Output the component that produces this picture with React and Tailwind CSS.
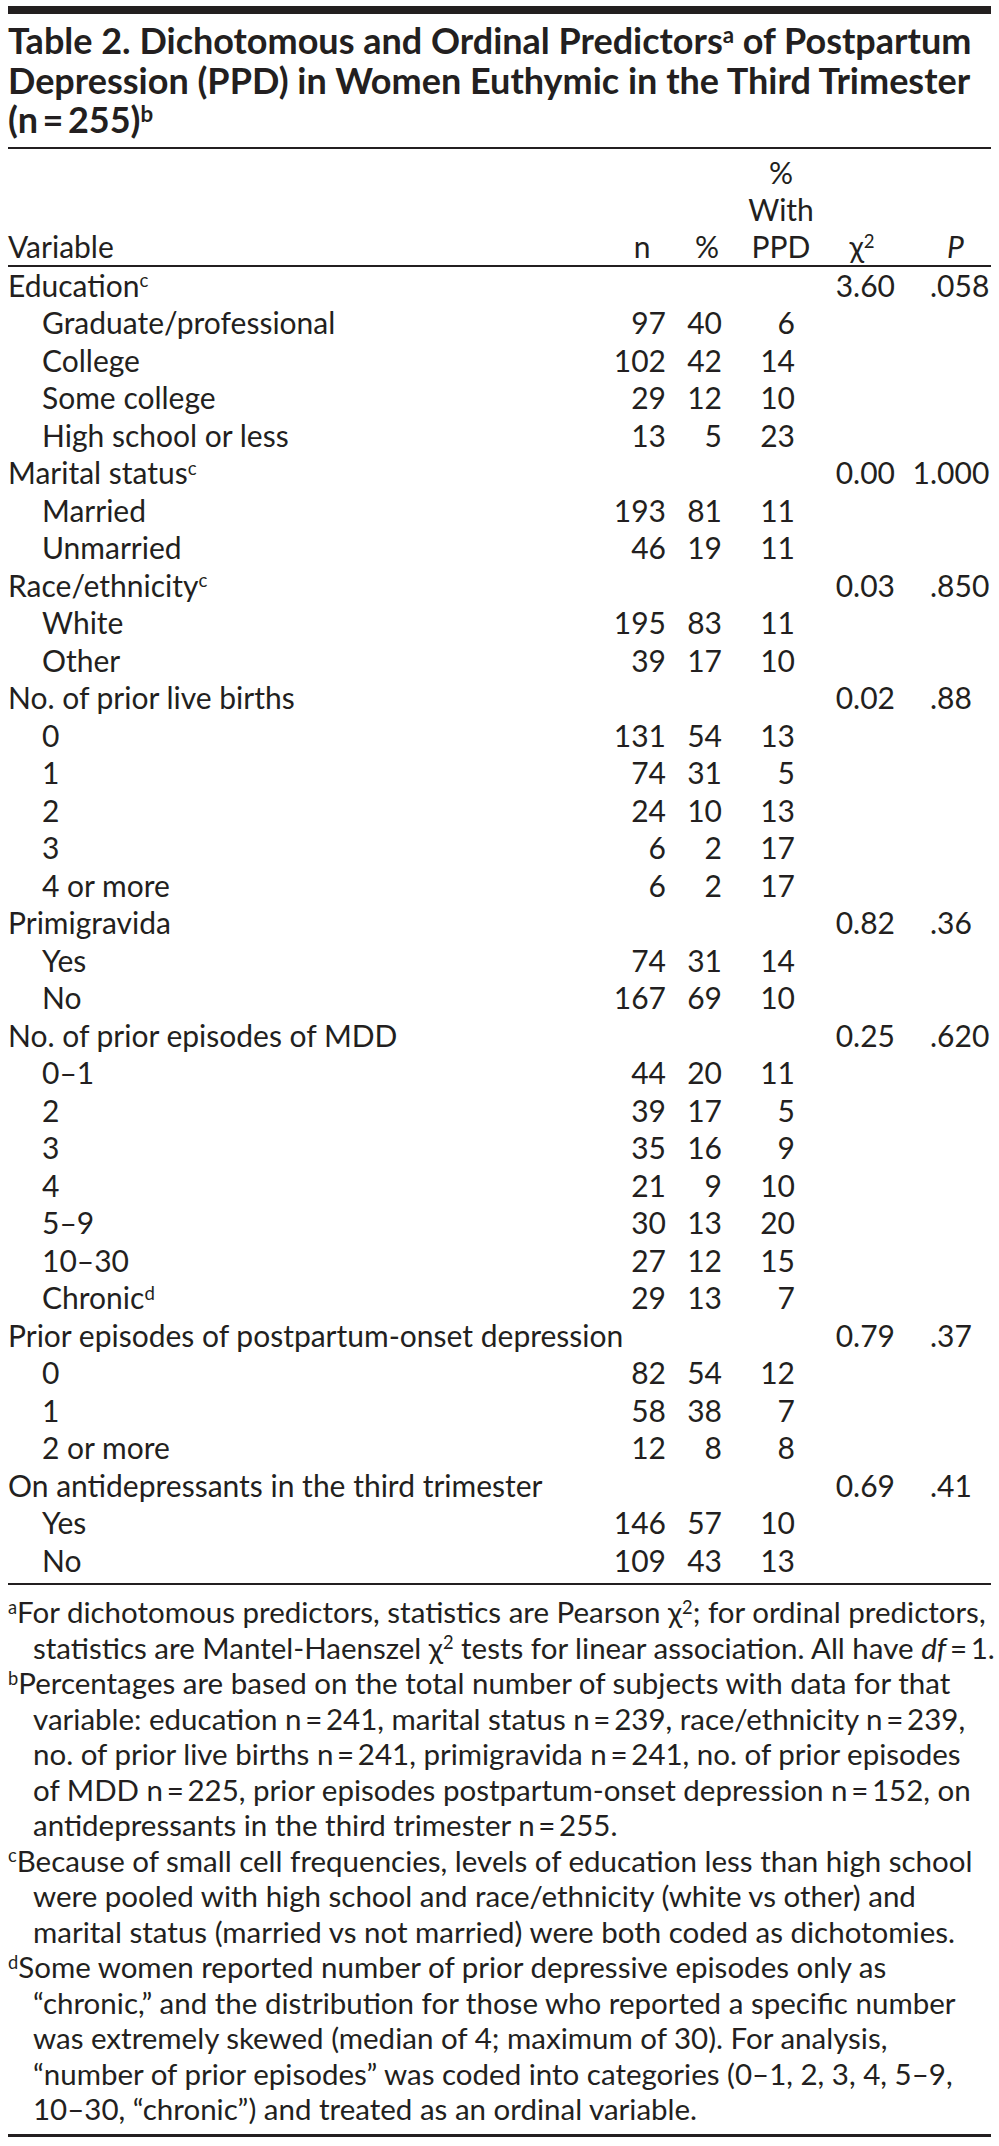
import React from "react";

const rows = [
  { label: "Education", sup: "c", chi: "3.60", p: ["", ".058"] },
  { label: "Graduate/professional", sub: true, n: "97", pct: "40", ppd: "6" },
  { label: "College", sub: true, n: "102", pct: "42", ppd: "14" },
  { label: "Some college", sub: true, n: "29", pct: "12", ppd: "10" },
  { label: "High school or less", sub: true, n: "13", pct: "5", ppd: "23" },
  { label: "Marital status", sup: "c", chi: "0.00", p: ["1", ".000"] },
  { label: "Married", sub: true, n: "193", pct: "81", ppd: "11" },
  { label: "Unmarried", sub: true, n: "46", pct: "19", ppd: "11" },
  { label: "Race/ethnicity", sup: "c", chi: "0.03", p: ["", ".850"] },
  { label: "White", sub: true, n: "195", pct: "83", ppd: "11" },
  { label: "Other", sub: true, n: "39", pct: "17", ppd: "10" },
  { label: "No. of prior live births", chi: "0.02", p: ["", ".88"] },
  { label: "0", sub: true, n: "131", pct: "54", ppd: "13" },
  { label: "1", sub: true, n: "74", pct: "31", ppd: "5" },
  { label: "2", sub: true, n: "24", pct: "10", ppd: "13" },
  { label: "3", sub: true, n: "6", pct: "2", ppd: "17" },
  { label: "4 or more", sub: true, n: "6", pct: "2", ppd: "17" },
  { label: "Primigravida", chi: "0.82", p: ["", ".36"] },
  { label: "Yes", sub: true, n: "74", pct: "31", ppd: "14" },
  { label: "No", sub: true, n: "167", pct: "69", ppd: "10" },
  { label: "No. of prior episodes of MDD", chi: "0.25", p: ["", ".620"] },
  { label: "0\u20131", sub: true, n: "44", pct: "20", ppd: "11" },
  { label: "2", sub: true, n: "39", pct: "17", ppd: "5" },
  { label: "3", sub: true, n: "35", pct: "16", ppd: "9" },
  { label: "4", sub: true, n: "21", pct: "9", ppd: "10" },
  { label: "5\u20139", sub: true, n: "30", pct: "13", ppd: "20" },
  { label: "10\u201330", sub: true, n: "27", pct: "12", ppd: "15" },
  { label: "Chronic", sup: "d", sub: true, n: "29", pct: "13", ppd: "7" },
  { label: "Prior episodes of postpartum-onset depression", chi: "0.79", p: ["", ".37"] },
  { label: "0", sub: true, n: "82", pct: "54", ppd: "12" },
  { label: "1", sub: true, n: "58", pct: "38", ppd: "7" },
  { label: "2 or more", sub: true, n: "12", pct: "8", ppd: "8" },
  { label: "On antidepressants in the third trimester", chi: "0.69", p: ["", ".41"] },
  { label: "Yes", sub: true, n: "146", pct: "57", ppd: "10" },
  { label: "No", sub: true, n: "109", pct: "43", ppd: "13" },
];

const T = "\u2009=\u2009";

function Sup({ children }) {
  return <sup className="text-[62%]">{children}</sup>;
}

function Row({ r }) {
  return (
    <div className="flex h-[37.5px] items-center whitespace-nowrap">
      <div className={`w-[604px] ${r.sub ? "pl-[34px]" : ""}`}>
        {r.label}
        {r.sup && <Sup>{r.sup}</Sup>}
      </div>
      <div className="w-[60px] pr-[6px] text-right">{r.n}</div>
      <div className="w-[70px] pr-[20px] text-right">{r.pct}</div>
      <div className="w-[78px] pr-[25px] text-right">{r.ppd}</div>
      <div className="w-[84px] pr-[9px] text-right">{r.chi}</div>
      <div className="flex w-[87px]">
        <span className="w-[26px] text-right">{r.p ? r.p[0] : ""}</span>
        <span>{r.p ? r.p[1] : ""}</span>
      </div>
    </div>
  );
}

function Note({ letter, lines }) {
  return (
    <div>
      {lines.map((l, i) => (
        <div key={i} className={`whitespace-nowrap ${i === 0 ? "" : "pl-[25px]"}`}>
          {i === 0 && <Sup>{letter}</Sup>}
          {l}
        </div>
      ))}
    </div>
  );
}

export default function App() {
  return (
    <div className="w-[999px] bg-white px-2 pt-[6px] pb-[11px] font-['Lato',sans-serif] text-[#231f20]">
      <div className="h-[8px] bg-[#231f20]" />
      <h1 className="border-b-2 border-[#231f20] pt-[7px] pb-[7px] text-[36px] font-bold leading-[39.5px]">
        Table 2. Dichotomous and Ordinal Predictors<Sup>a</Sup> of Postpartum
        <br />
        Depression (PPD) in Women Euthymic in the Third Trimester
        <br />
        (n{T}255)<Sup>b</Sup>
      </h1>

      <div className="text-[30px]">
        <div className="flex items-end border-b-2 border-[#231f20] pt-[5px] leading-[37px] whitespace-nowrap">
          <div className="w-[604px]">Variable</div>
          <div className="w-[60px] text-center">n</div>
          <div className="w-[70px] text-center">%</div>
          <div className="flex w-[78px] flex-col items-center">
            <span>%</span>
            <span>With</span>
            <span>PPD</span>
          </div>
          <div className="w-[84px] text-center">
            χ<Sup>2</Sup>
          </div>
          <div className="w-[87px] pl-[43px] italic">P</div>
        </div>

        <div className="border-b-2 border-[#231f20] pb-[4px]">
          {rows.map((r, i) => (
            <Row key={i} r={r} />
          ))}
        </div>
      </div>

      <div className="border-b-[3px] border-[#231f20] pt-[9px] pb-[7px] text-[29.5px] leading-[35.5px]">
        <Note
          letter="a"
          lines={[
            <>For dichotomous predictors, statistics are Pearson χ<Sup>2</Sup>; for ordinal predictors,</>,
            <>
              statistics are Mantel-Haenszel χ<Sup>2</Sup> tests for linear association. All have <i>df</i>
              {T}1.
            </>,
          ]}
        />
        <Note
          letter="b"
          lines={[
            "Percentages are based on the total number of subjects with data for that",
            `variable: education n${T}241, marital status n${T}239, race/ethnicity n${T}239,`,
            `no. of prior live births n${T}241, primigravida n${T}241, no. of prior episodes`,
            `of MDD n${T}225, prior episodes postpartum-onset depression n${T}152, on`,
            `antidepressants in the third trimester n${T}255.`,
          ]}
        />
        <Note
          letter="c"
          lines={[
            "Because of small cell frequencies, levels of education less than high school",
            "were pooled with high school and race/ethnicity (white vs other) and",
            "marital status (married vs not married) were both coded as dichotomies.",
          ]}
        />
        <Note
          letter="d"
          lines={[
            "Some women reported number of prior depressive episodes only as",
            "\u201cchronic,\u201d and the distribution for those who reported a specific number",
            "was extremely skewed (median of 4; maximum of 30). For analysis,",
            "\u201cnumber of prior episodes\u201d was coded into categories (0\u20131, 2, 3, 4, 5\u20139,",
            "10\u201330, \u201cchronic\u201d) and treated as an ordinal variable.",
          ]}
        />
      </div>
    </div>
  );
}
